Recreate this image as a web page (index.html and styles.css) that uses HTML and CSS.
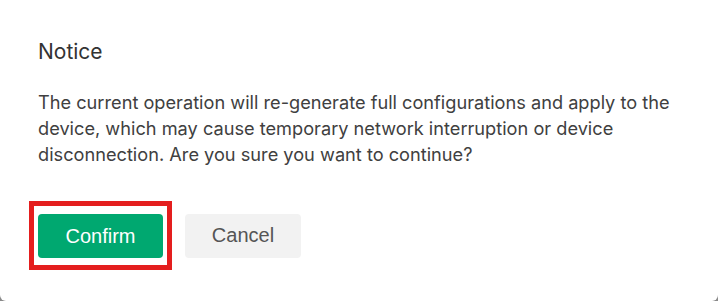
FILE: index.html
```html
<!DOCTYPE html>
<html>
<head>
<meta charset="utf-8">
<link rel="stylesheet" href="styles.css">
</head>
<body>
<div class="dialog">
  <h2 class="title">Notice</h2>
  <p class="message">The current operation will re-generate full configurations and apply to the device, which may cause temporary network interruption or device disconnection. Are you sure you want to continue?</p>
  <div class="actions">
    <div class="highlight">
      <button class="btn btn-primary">Confirm</button>
    </div>
    <button class="btn btn-default">Cancel</button>
  </div>
</div>
</body>
</html>
```

FILE: styles.css
```css
html, body {
  margin: 0;
  padding: 0;
  background: #8a8a8a;
}
.dialog {
  width: 718px;
  height: 301px;
  box-sizing: border-box;
  background: #fff;
  border-radius: 0 0 6px 6px;
  padding: 38px 38px 0 38px;
  font-family: Inter, "Noto Sans", sans-serif;
  color: #3a3a3a;
}
.title {
  margin: 0;
  font-size: 21px;
  font-weight: 400;
  line-height: 28px;
  color: #333;
}
.message {
  margin: 23px 0 0 0;
  font-size: 18.2px;
  line-height: 26px;
  width: 650px;
  color: #404040;
}
.actions {
  display: flex;
  align-items: center;
  margin-top: 34px;
  margin-left: -9px;
}
.highlight {
  border: 5px solid #e41e1e;
  padding: 8px 4px 7px 4px;
  margin-right: 13px;
}
.btn {
  border: none;
  height: 44px;
  border-radius: 4px;
  font-family: "Liberation Sans", Arial, sans-serif;
  font-size: 20px;
  cursor: pointer;
  display: block;
}
.btn-primary {
  width: 125px;
  background: #00a870;
  color: #fff;
}
.btn-default {
  width: 116px;
  background: #f2f2f2;
  color: #555;
}
```
